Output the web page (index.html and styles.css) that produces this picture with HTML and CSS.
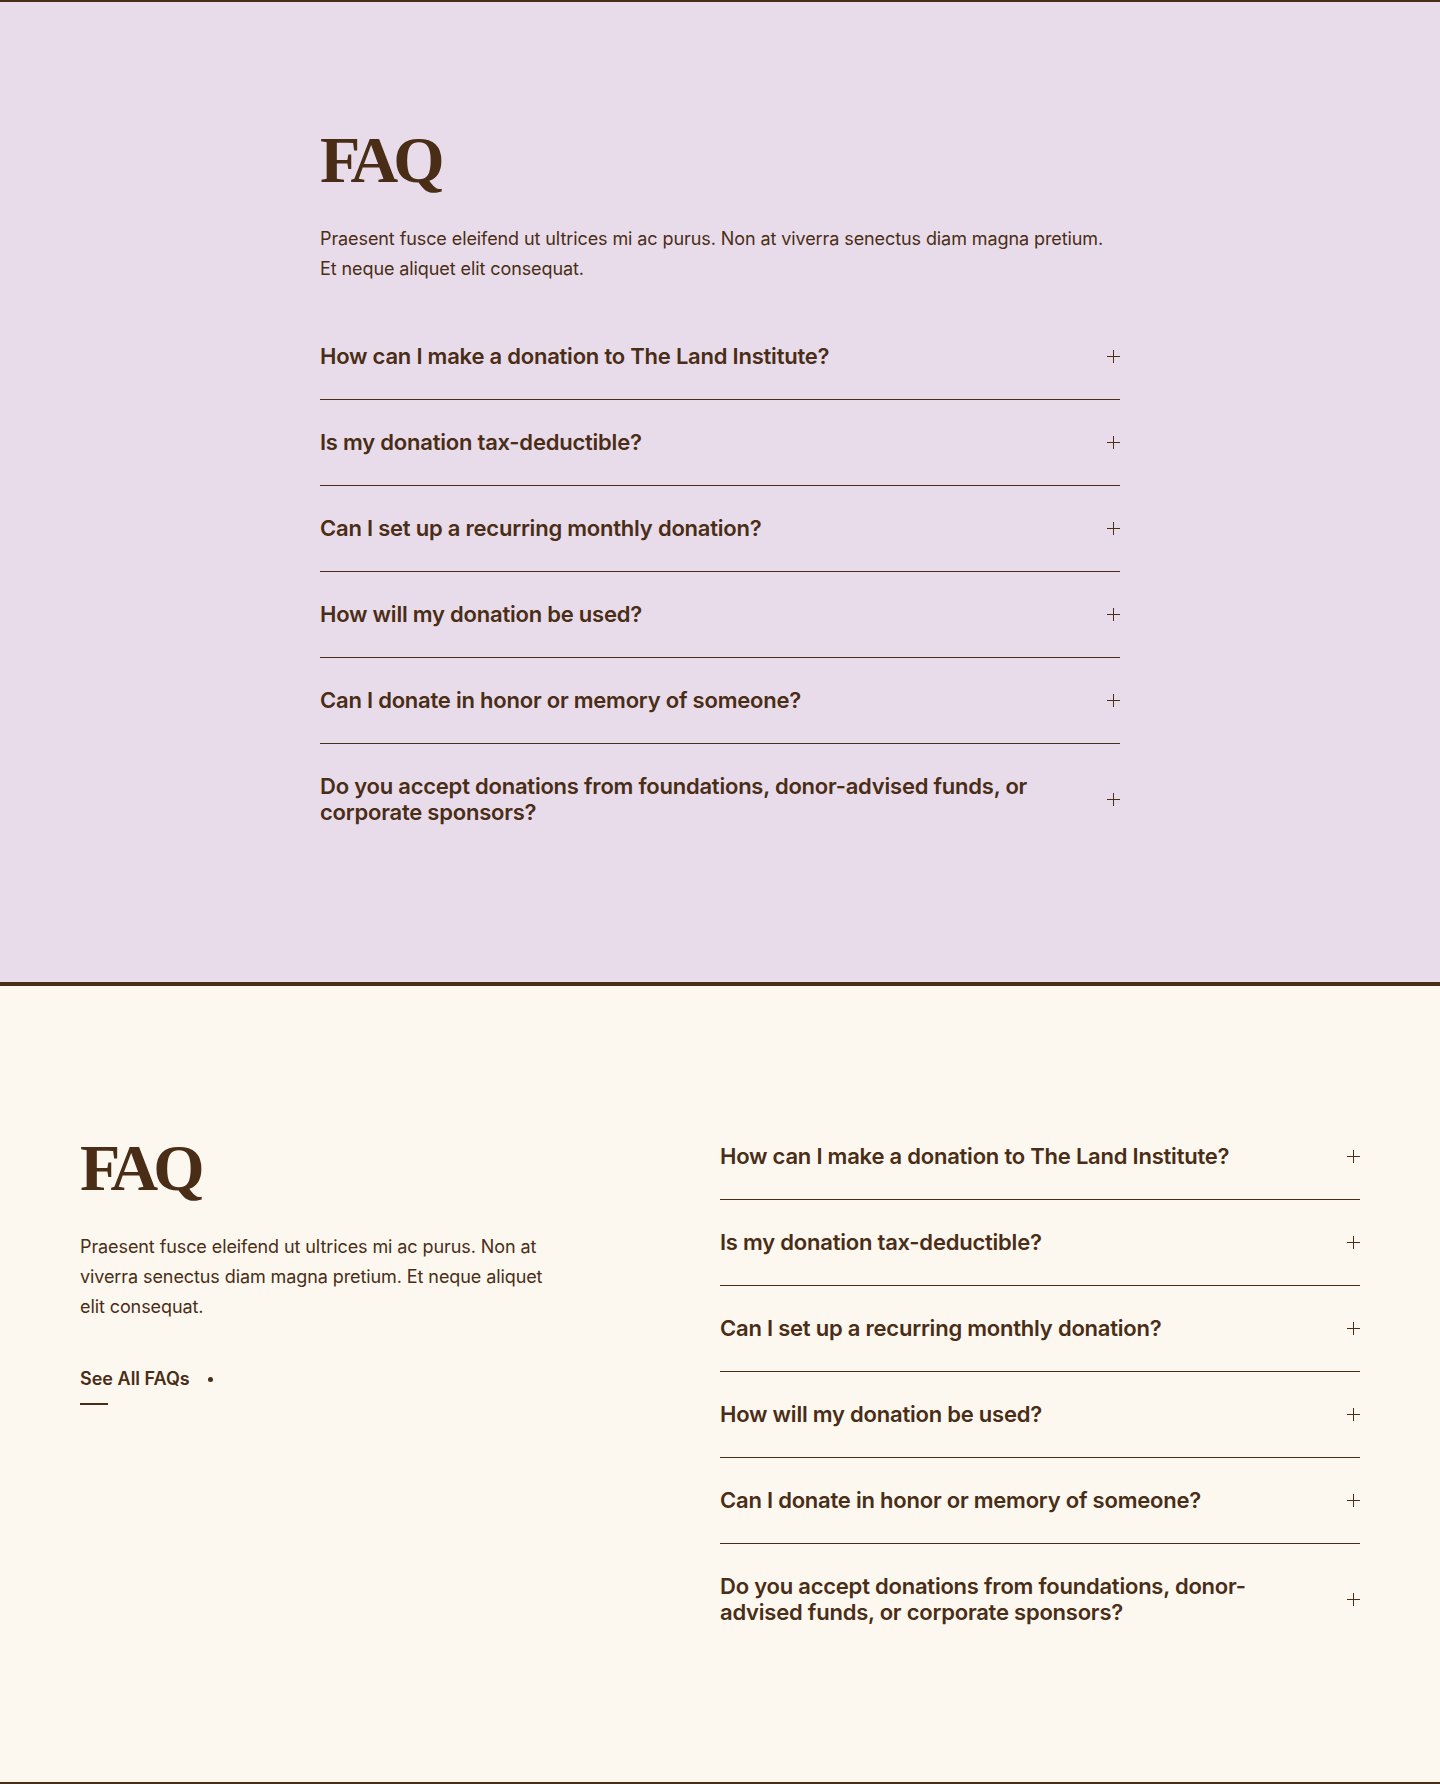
FILE: index.html
```html
<!DOCTYPE html>
<html lang="en">
<head>
<meta charset="utf-8">
<title>FAQ</title>
<link rel="stylesheet" href="styles.css">
</head>
<body>
<section class="faq faq--stacked">
  <div class="faq__inner">
    <h2 class="faq__title">FAQ</h2>
    <p class="faq__intro">Praesent fusce eleifend ut ultrices mi ac purus. Non at viverra senectus diam magna pretium. Et neque aliquet elit consequat.</p>
    <div class="faq__list">
      <div class="faq__item"><span class="faq__q">How can I make a donation to The Land Institute?</span><span class="faq__plus"></span></div>
      <div class="faq__item"><span class="faq__q">Is my donation tax-deductible?</span><span class="faq__plus"></span></div>
      <div class="faq__item"><span class="faq__q">Can I set up a recurring monthly donation?</span><span class="faq__plus"></span></div>
      <div class="faq__item"><span class="faq__q">How will my donation be used?</span><span class="faq__plus"></span></div>
      <div class="faq__item"><span class="faq__q">Can I donate in honor or memory of someone?</span><span class="faq__plus"></span></div>
      <div class="faq__item"><span class="faq__q">Do you accept donations from foundations, donor-advised funds, or corporate sponsors?</span><span class="faq__plus"></span></div>
    </div>
  </div>
</section>
<section class="faq faq--split">
  <div class="faq__side">
    <h2 class="faq__title">FAQ</h2>
    <p class="faq__intro faq__intro--narrow">Praesent fusce eleifend ut ultrices mi ac purus. Non at viverra senectus diam magna pretium. Et neque aliquet elit consequat.</p>
    <a class="faq__link" href="#">See All FAQs<span class="faq__dot"></span></a>
  </div>
  <div class="faq__list">
    <div class="faq__item"><span class="faq__q">How can I make a donation to The Land Institute?</span><span class="faq__plus"></span></div>
    <div class="faq__item"><span class="faq__q">Is my donation tax-deductible?</span><span class="faq__plus"></span></div>
    <div class="faq__item"><span class="faq__q">Can I set up a recurring monthly donation?</span><span class="faq__plus"></span></div>
    <div class="faq__item"><span class="faq__q">How will my donation be used?</span><span class="faq__plus"></span></div>
    <div class="faq__item"><span class="faq__q">Can I donate in honor or memory of someone?</span><span class="faq__plus"></span></div>
    <div class="faq__item"><span class="faq__q">Do you accept donations from foundations, donor-advised funds, or corporate sponsors?</span><span class="faq__plus"></span></div>
  </div>
</section>
</body>
</html>
```
FILE: styles.css
```css
* { box-sizing: border-box; }
html, body { margin: 0; padding: 0; }
body {
  font-family: Inter, "Noto Sans", sans-serif;
  color: #4a2d16;
}
.faq {
  border-top: 2px solid #4a2d16;
  border-bottom: 2px solid #4a2d16;
}
.faq--stacked {
  background: #e8dcea;
  padding: 126px 0 127px;
}
.faq__inner {
  width: 800px;
  margin: 0 auto;
}
.faq--split {
  background: #fcf8f0;
  padding: 128px 80px 127px;
  display: grid;
  grid-template-columns: 1fr 1fr;
}
.faq__side {
  padding-top: 22px;
}
.faq__title {
  margin: 0;
  font-family: "Liberation Serif", serif;
  font-weight: 700;
  font-size: 66px;
  line-height: 64px;
  letter-spacing: -0.075em;
  color: #4a2d16;
}
.faq__intro {
  margin: 32px 0 0;
  font-size: 18px;
  line-height: 30px;
  letter-spacing: -0.005em;
  color: #4a2d16;
}
.faq__intro--narrow {
  max-width: 480px;
}
.faq--stacked .faq__list {
  margin-top: 30px;
}
.faq__item {
  display: flex;
  align-items: center;
  justify-content: space-between;
  gap: 24px;
  padding: 29px 0 30px;
  border-bottom: 1px solid #4a2d16;
}
.faq__item:last-child {
  border-bottom: 0;
}
.faq__q {
  flex: 0 1 auto;
  max-width: calc(100% - 64px);
  font-size: 22px;
  line-height: 26px;
  font-weight: 600;
  letter-spacing: -0.01em;
}
.faq__plus {
  position: relative;
  flex: 0 0 13px;
  width: 13px;
  height: 13px;
}
.faq__plus::before,
.faq__plus::after {
  content: "";
  position: absolute;
  background: #4a2d16;
}
.faq__plus::before {
  left: 0; right: 0; top: 6px; height: 1.25px;
}
.faq__plus::after {
  top: 0; bottom: 0; left: 6px; width: 1.25px;
}
.faq__link {
  display: inline-flex;
  align-items: center;
  position: relative;
  margin-top: 45px;
  font-size: 18px;
  line-height: 24px;
  font-weight: 600;
  letter-spacing: 0;
  color: #4a2d16;
  text-decoration: none;
  padding-bottom: 14px;
}
.faq__link::after {
  content: "";
  position: absolute;
  left: 0;
  bottom: 0;
  width: 28px;
  height: 2px;
  background: #4a2d16;
}
.faq__dot {
  width: 5px;
  height: 5px;
  border-radius: 50%;
  background: #4a2d16;
  margin-left: 18px;
}
```
